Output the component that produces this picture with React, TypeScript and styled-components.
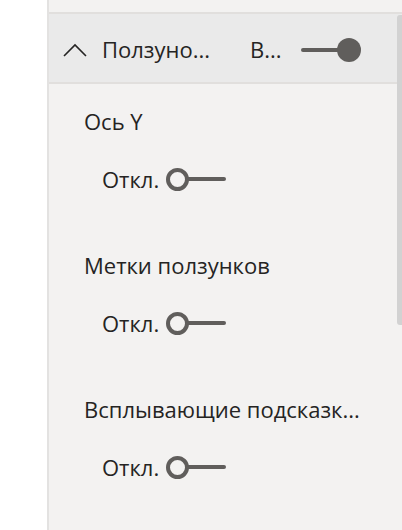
import React from "react";
import styled, { createGlobalStyle } from "styled-components";

const Global = createGlobalStyle`
  html, body { margin: 0; padding: 0; background: #ffffff; }
  body { font-family: "Open Sans", "Noto Sans", sans-serif; }
`;

const Page = styled.div`
  display: flex;
  width: 402px;
  height: 530px;
  overflow: hidden;
`;

const Gutter = styled.div`
  width: 47px;
  flex: none;
  background: #ffffff;
`;

const Panel = styled.div`
  position: relative;
  flex: 1;
  display: flex;
  flex-direction: column;
  background: #f3f2f1;
  border-left: 2px solid #e3e2e1;
  & > * { flex: none; }
`;

const TopStrip = styled.div`
  height: 12px;
  border-bottom: 2px solid #e1dfdd;
`;

const Header = styled.div`
  display: flex;
  align-items: center;
  height: 70px;
  padding-left: 14px;
  padding-top: 4px;
  box-sizing: border-box;
  background: #eaeaea;
  border-bottom: 2px solid #e1dfdd;
  color: #252423;
  font-size: 22px;
`;

const Chevron = styled.svg`
  width: 24px;
  height: 14px;
  flex: none;
  margin-right: 15px;
`;

const HeaderTitle = styled.span`
  width: 148px;
  flex: none;
  white-space: nowrap;
  margin-top: -2px;
`;

const HeaderState = styled.span`
  width: 51px;
  flex: none;
  white-space: nowrap;
  margin-top: -2px;
`;

const Body = styled.div`
  display: flex;
  flex-direction: column;
  padding: 22px 0 0 35px;
`;

const Group = styled.div`
  display: flex;
  flex-direction: column;
  height: 144px;
  flex: none;
`;

const Label = styled.div`
  font-size: 22px;
  color: #252423;
  height: 30px;
  line-height: 30px;
  white-space: nowrap;
`;

const ToggleRow = styled.div`
  display: flex;
  align-items: center;
  margin-top: 28px;
  padding-left: 18px;
  gap: 7px;
  font-size: 22px;
  color: #252423;
`;

const Track = styled.div<{ $on?: boolean }>`
  position: relative;
  display: flex;
  align-items: center;
  justify-content: ${(p) => (p.$on ? "flex-end" : "flex-start")};
  width: 60px;
  height: 24px;
  flex: none;
  &::before {
    content: "";
    position: absolute;
    left: ${(p) => (p.$on ? "0" : "12px")};
    right: ${(p) => (p.$on ? "12px" : "0")};
    top: 10px;
    height: 4px;
    border-radius: 2px;
    background: #605e5c;
  }
`;

const Knob = styled.div<{ $on?: boolean }>`
  position: relative;
  box-sizing: border-box;
  width: ${(p) => (p.$on ? "24px" : "23px")};
  height: ${(p) => (p.$on ? "24px" : "23px")};
  border-radius: 50%;
  background: ${(p) => (p.$on ? "#605e5c" : "#f3f2f1")};
  border: ${(p) => (p.$on ? "none" : "4px solid #605e5c")};
`;

const Scrollbar = styled.div`
  position: absolute;
  right: 0;
  top: 15px;
  width: 5px;
  height: 310px;
  border-radius: 3px 0 0 3px;
  background: #d2d2d2;
`;

const Toggle = ({ on }: { on?: boolean }) => (
  <Track $on={on}>
    <Knob $on={on} />
  </Track>
);

const items = ["Ось Y", "Метки ползунков", "Всплывающие подсказк..."];

export default function App() {
  return (
    <>
      <Global />
      <Page>
        <Gutter />
        <Panel>
          <TopStrip />
          <Header>
            <Chevron viewBox="0 0 24 14">
              <path d="M1 13 L12 2 L23 13" fill="none" stroke="#252423" strokeWidth="1.6" />
            </Chevron>
            <HeaderTitle>Ползуно...</HeaderTitle>
            <HeaderState>В...</HeaderState>
            <Toggle on />
          </Header>
          <Body>
            {items.map((t) => (
              <Group key={t}>
                <Label>{t}</Label>
                <ToggleRow>
                  <span>Откл.</span>
                  <Toggle />
                </ToggleRow>
              </Group>
            ))}
          </Body>
          <Scrollbar />
        </Panel>
      </Page>
    </>
  );
}
